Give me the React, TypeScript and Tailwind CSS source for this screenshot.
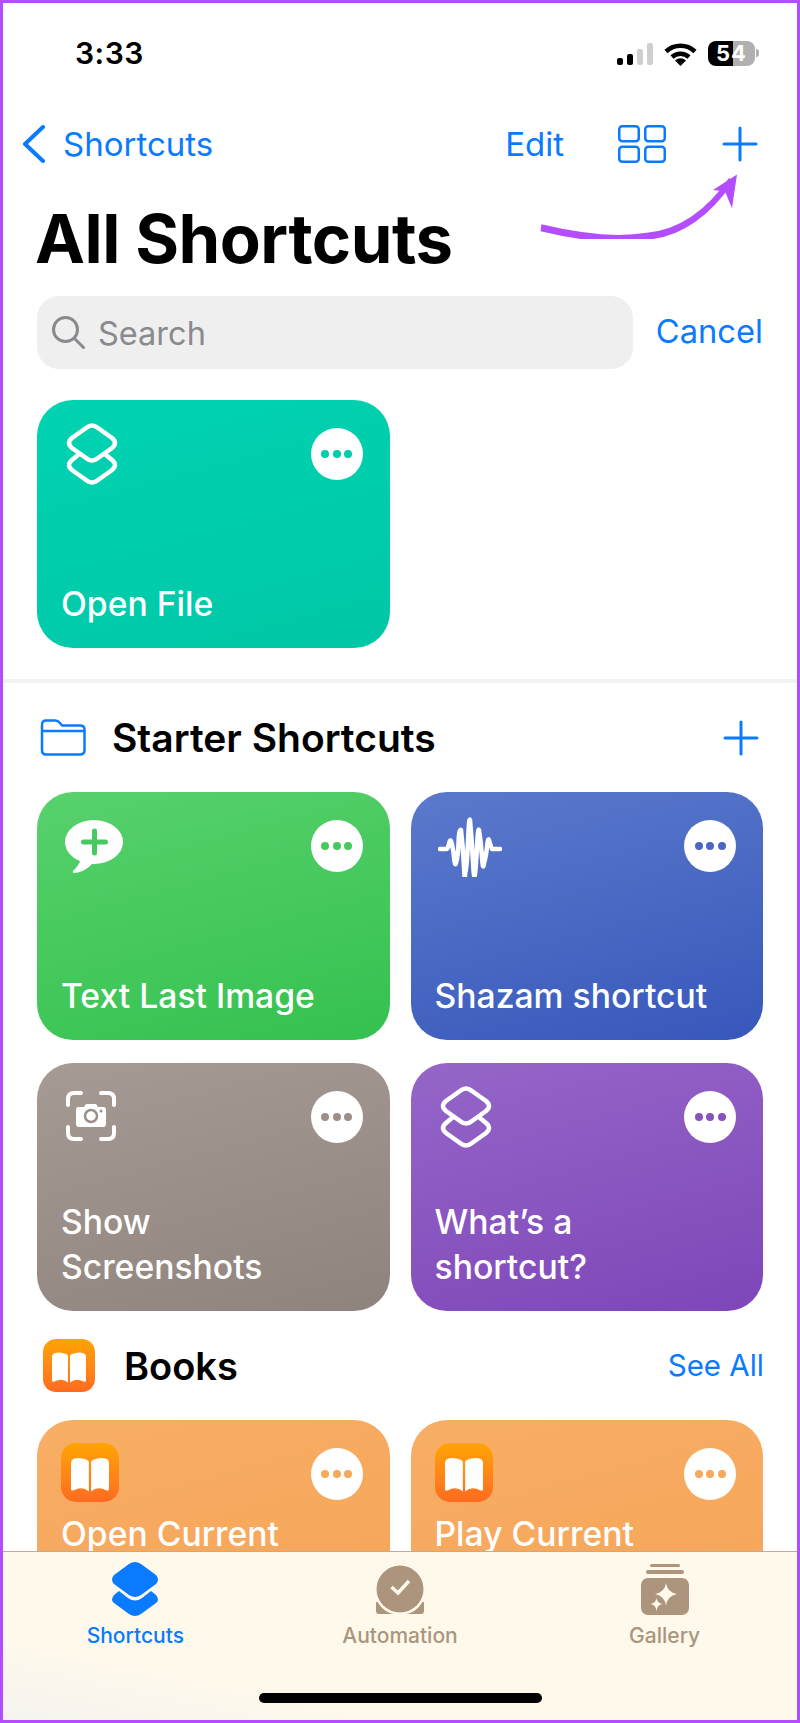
import type { ReactNode } from "react";

function Layers({ className = "" }: { className?: string }) {
  return (
    <svg viewBox="0 0 54 62" className={className} fill="none" stroke="white" strokeWidth="4.5" strokeLinecap="round">
      <path d="M21 5Q27 0 33 5L47 15Q53 20 47 25L33 35Q27 40 21 35L7 25Q1 20 7 15Z" />
      <path d="M13 32L7 37Q1 42 7 47L21 57Q27 62 33 57L47 47Q53 42 47 37L41 32" />
    </svg>
  );
}

function BookIcon({ className = "" }: { className?: string }) {
  return (
    <div className={`flex items-center justify-center bg-gradient-to-b from-[#ffa400] to-[#fe6a1f] ${className}`}>
      <svg viewBox="0 0 52 52" className="w-full h-full" fill="white">
        <path d="M25 17Q25 15 23 14.500Q17 12 12 13.500Q9 14.500 9 17.500L9 41Q9 43 11.500 42Q19 38 25 43Z" />
        <path d="M27 17Q27 15 29 14.500Q35 12 40 13.500Q43 14.500 43 17.500L43 41Q43 43 40.500 42Q33 38 27 43Z" />
      </svg>
    </div>
  );
}

function Dots({ dot }: { dot: string }) {
  return (
    <div className="w-[52px] h-[52px] rounded-full bg-white flex items-center justify-center gap-[3.500px] shrink-0">
      <span className={`w-[8px] h-[8px] rounded-full ${dot}`} />
      <span className={`w-[8px] h-[8px] rounded-full ${dot}`} />
      <span className={`w-[8px] h-[8px] rounded-full ${dot}`} />
    </div>
  );
}

function Card(props: { bg: string; dot: string; icon: ReactNode; title: ReactNode; titleClass?: string; iconClass?: string }) {
  return (
    <div className={`h-[248px] rounded-[36px] pl-[24px] pr-[27px] flex flex-col text-white ${props.bg}`}>
      <div className="flex justify-between items-start pt-[23px]">
        <div className={props.iconClass}>{props.icon}</div>
        <div className="mt-[5px]">
          <Dots dot={props.dot} />
        </div>
      </div>
      <div className={`mt-auto text-[33.700px] leading-[45px] font-medium ${props.titleClass ?? "pb-[22px]"}`}>{props.title}</div>
    </div>
  );
}

function Plus({ className = "" }: { className?: string }) {
  return (
    <svg viewBox="0 0 36 36" className={className} fill="none" stroke="#0a7aff" strokeWidth="3" strokeLinecap="round">
      <path d="M18 2V34M2 18H34" />
    </svg>
  );
}

export default function App() {
  return (
    <div className="relative w-[800px] h-[1723px] box-border overflow-hidden border-[3px] border-[#b44dff] bg-white [font-family:Inter,sans-serif] text-black">
      {/* Status bar */}
      <div className="h-[100px] flex items-center justify-between pl-[72px] pr-[38px]">
        <span className="text-[30px] font-semibold tracking-[0.5px]">3:33</span>
        <div className="flex items-center">
          <div className="flex items-end gap-[4px] h-[22px] mt-[1px]">
            <span className="w-[6px] h-[7px] rounded-[2px] bg-black" />
            <span className="w-[6px] h-[11px] rounded-[2px] bg-black" />
            <span className="w-[6px] h-[16px] rounded-[2px] bg-[#cfcfcf]" />
            <span className="w-[6px] h-[22px] rounded-[2px] bg-[#cfcfcf]" />
          </div>
          <svg viewBox="0 0 33 24" className="w-[33px] h-[24px] ml-[11px] mb-[-1px]" fill="none" stroke="black" strokeWidth="4.500">
            <path d="M2 9.500A21 21 0 0 1 31 9.500" />
            <path d="M8 15A12.500 12.500 0 0 1 25 15" />
            <path d="M16.500 24L11 18.500A8 8 0 0 1 22 18.500Z" fill="black" stroke="none" />
          </svg>
          <div className="ml-[11px] w-[47px] h-[25px] rounded-[8px] bg-[linear-gradient(to_right,black_53%,#b0b0b0_53%)] flex items-center justify-center text-white text-[22px] font-bold leading-none tracking-[1px]">
            54
          </div>
          <span className="ml-[1px] w-[3px] h-[8px] rounded-r-full bg-[#b0b0b0]" />
        </div>
      </div>

      {/* Nav */}
      <div className="h-[82px] flex items-center pl-[19px] pr-[39px] text-[#0a7aff]">
        <svg viewBox="0 0 24 38" className="w-[24px] h-[38px]" fill="none" stroke="#0a7aff" strokeWidth="4" strokeLinecap="round" strokeLinejoin="round">
          <path d="M21 2L3 19L21 36" />
        </svg>
        <span className="ml-[17px] text-[33px] leading-none">Shortcuts</span>
        <span className="ml-auto text-[33px] leading-none">Edit</span>
        <svg viewBox="0 0 48 38" className="w-[48px] h-[38px] ml-[54px]" fill="none" stroke="#0a7aff" strokeWidth="2.500">
          <rect x="1.250" y="1.250" width="19.500" height="15" rx="3" />
          <rect x="27.250" y="1.250" width="19.500" height="15" rx="3" />
          <rect x="1.250" y="21.750" width="19.500" height="15" rx="3" />
          <rect x="27.250" y="21.750" width="19.500" height="15" rx="3" />
        </svg>
        <Plus className="w-[36px] h-[36px] ml-[56px]" />
      </div>

      {/* Title */}
      <div className="h-[111px] flex items-center pl-[32px] pr-[34px]">
        <h1 className="text-[67px] leading-none font-bold tracking-[-0.5px] mt-[-4px]">All Shortcuts</h1>
      </div>

      {/* Search */}
      <div className="flex items-center px-[34px]">
        <div className="w-[596px] h-[73px] rounded-[22px] bg-[#efefef] flex items-center pl-[15px]">
          <svg viewBox="0 0 33 33" className="w-[33px] h-[33px]" fill="none" stroke="#8a8a8e" strokeWidth="3" strokeLinecap="round">
            <circle cx="13.500" cy="13.500" r="12" />
            <path d="M22.500 22.500L31.500 31.500" />
          </svg>
          <span className="ml-[13px] mt-[4px] text-[32.500px] leading-none text-[#8a8a8e]">Search</span>
        </div>
        <span className="ml-auto text-[32.700px] leading-none text-[#0a7aff] mt-[-2px]">Cancel</span>
      </div>

      {/* Pinned */}
      <div className="grid grid-cols-2 gap-x-[21px] px-[34px] pt-[31px]">
        <Card
          bg="bg-[linear-gradient(165deg,#00d3b2,#00c7a6)]"
          dot="bg-[#00cdab]"
          icon={<Layers className="w-[54px] h-[62px]" />}
          iconClass="ml-[4px]"
          title="Open File"
        />
      </div>

      <div className="mt-[31px] h-[4px] bg-[#f2f2f4]" />

      {/* Starter Shortcuts */}
      <div className="h-[109px] flex items-center pl-[38px] pr-[38px]">
        <svg viewBox="0 0 46 37" className="w-[46px] h-[37px] -ml-[1px]" fill="none" stroke="#0a7aff" strokeWidth="2.500" strokeLinejoin="round">
          <path d="M2 6Q2 1.500 6 1.500H15Q18 1.500 20 4L22 6.500H40Q44.500 6.500 44.500 10.500V31Q44.500 35.500 40 35.500H6Q2 35.500 2 31Z" />
          <path d="M2 12H44.500" />
        </svg>
        <h2 className="ml-[26px] text-[39px] leading-none font-semibold">Starter Shortcuts</h2>
        <Plus className="w-[36px] h-[36px] ml-auto" />
      </div>

      <div className="grid grid-cols-2 gap-x-[21px] gap-y-[23px] px-[34px]">
        <Card
          bg="bg-[linear-gradient(165deg,#58d16d,#34c14f)]"
          dot="bg-[#47c95f]"
          icon={
            <svg viewBox="0 0 58 54" className="w-[58px] h-[54px]">
              <ellipse cx="29" cy="22" rx="29" ry="22" fill="white" />
              <path d="M16 38Q14 46 8 51Q7 53 10 53Q20 52 28 43Z" fill="white" />
              <path d="M29.500 11V33M18.500 22H40.500" stroke="#47c95f" strokeWidth="5" strokeLinecap="round" />
            </svg>
          }
          iconClass="ml-[4px] mt-[5px]"
          title="Text Last Image"
        />
        <Card
          bg="bg-[linear-gradient(165deg,#5b79cc,#3758bb)]"
          dot="bg-[#4c68c4]"
          icon={
            <svg viewBox="0 0 64 60" className="w-[64px] h-[60px]" fill="none" stroke="white" strokeWidth="4.500" strokeLinecap="round" strokeLinejoin="round">
              <path d="M2 32H8Q10 32 11 27T13 24Q15 30 16 40T18 46Q20 40 20.500 26T23 13Q25 30 26 50T27 57Q29 50 30 25T32 3Q34 25 35 45T37 57Q38 50 39 30T41 13Q43 25 44 40T46 46Q48 40 49 30T51 23Q53 30 54 32H62" />
            </svg>
          }
          iconClass="ml-[3px] mt-[2px]"
          title="Shazam shortcut"
        />
        <Card
          bg="bg-[linear-gradient(165deg,#a59b94,#8f837d)]"
          dot="bg-[#9b8f88]"
          icon={
            <svg viewBox="0 0 50 50" className="w-[50px] h-[50px]">
              <g fill="none" stroke="white" strokeWidth="4" strokeLinecap="round">
                <path d="M2 14V8Q2 2 8 2H15M35 2H42Q48 2 48 8V14M48 36V42Q48 48 42 48H35M15 48H8Q2 48 2 42V36" />
              </g>
              <path d="M12 16Q10 16 10 19V33Q10 36 13 36H37Q40 36 40 33V19Q40 16 37 16H32L30 13H20L18 16Z" fill="white" />
              <circle cx="25" cy="25" r="6" fill="none" stroke="#9b8f88" strokeWidth="2.500" />
              <circle cx="35" cy="20" r="1.500" fill="#9b8f88" />
            </svg>
          }
          iconClass="ml-[5px] mt-[5px]"
          title={
            <>
              Show
              <br />
              Screenshots
            </>
          }
        />
        <Card
          bg="bg-[linear-gradient(165deg,#9566c8,#7e46b9)]"
          dot="bg-[#8852bf]"
          icon={<Layers className="w-[54px] h-[62px]" />}
          iconClass="ml-[4px]"
          title={
            <>
              What’s a
              <br />
              shortcut?
            </>
          }
        />
      </div>

      {/* Books */}
      <div className="h-[109px] flex items-center pl-[40px] pr-[33px]">
        <BookIcon className="w-[52px] h-[53px] rounded-[13px]" />
        <h2 className="ml-[29px] text-[38px] leading-none font-semibold">Books</h2>
        <span className="ml-auto text-[29.500px] leading-none text-[#0a7aff]">See All</span>
      </div>

      <div className="grid grid-cols-2 gap-x-[21px] px-[34px]">
        <Card
          bg="bg-[linear-gradient(165deg,#f8ae65,#f5a355)]"
          dot="bg-[#f6a85b]"
          icon={<BookIcon className="w-[58px] h-[59px] rounded-[15px]" />}
          title="Open Current"
          titleClass="pb-[112px]"
        />
        <Card
          bg="bg-[linear-gradient(165deg,#f8ae65,#f5a355)]"
          dot="bg-[#f6a85b]"
          icon={<BookIcon className="w-[58px] h-[59px] rounded-[15px]" />}
          title="Play Current"
          titleClass="pb-[112px]"
        />
      </div>

      {/* Arrow annotation */}
      <svg viewBox="0 0 230 50" className="absolute left-[532px] top-[166px] w-[230px] h-[70px]" preserveAspectRatio="none" fill="none">
        <path d="M6 42Q70 53 112 48Q160 45 196 8" stroke="#b44dff" strokeWidth="5" />
        <path d="M202 4L178 15L190 16L197 28Z" fill="#b44dff" />
      </svg>

      {/* Tab bar */}
      <div className="absolute left-0 right-0 bottom-0 h-[169px] border-t border-[#b8ae9c] bg-gradient-to-tr from-[#f6f3ef] via-[#fef9eb] via-25% to-[#fef9ea] flex flex-col">
        <div className="grid grid-cols-3 pt-[10px]">
          <div className="flex flex-col items-center text-[#0a7aff]">
            <svg viewBox="0 0 48 54" className="w-[48px] h-[54px]" fill="#0a7aff">
              <path d="M18 2Q24 -2 30 2L45 13Q49 17.500 45 22L30 33Q24 37 18 33L3 22Q-1 17.500 3 13Z" />
              <path d="M8 29L17 36Q24 41 31 36L40 29L45 33Q49 38 45 41L30 52Q24 56 18 52L3 41Q-1 38 3 33Z" />
            </svg>
            <span className="mt-[7px] text-[21px] leading-[26px] font-medium">Shortcuts</span>
          </div>
          <div className="flex flex-col items-center text-[#a8967f]">
            <svg viewBox="0 0 48 54" className="w-[48px] h-[54px]">
              <path d="M0 40H48V49Q48 52 45 52H3Q0 52 0 49Z" fill="#ac957c" />
              <circle cx="24" cy="27" r="26" fill="#fef9eb" />
              <circle cx="24" cy="27" r="23.500" fill="#ac957c" />
              <path d="M15.500 25L22 31L33 19" fill="none" stroke="#fef9eb" strokeWidth="3.500" />
            </svg>
            <span className="mt-[7px] text-[21px] leading-[26px] font-medium">Automation</span>
          </div>
          <div className="flex flex-col items-center text-[#a8967f]">
            <svg viewBox="0 0 48 54" className="w-[48px] h-[54px]">
              <rect x="9" y="2" width="30" height="3" rx="1.500" fill="#ac957c" />
              <rect x="5" y="8" width="38" height="4" rx="2" fill="#ac957c" />
              <rect x="0" y="16" width="48" height="37" rx="7" fill="#ac957c" />
              <path d="M25 21Q26 30 36 32Q26 34 25 44Q24 34 14 32Q24 30 25 21Z" fill="#fef9eb" />
              <path d="M15.500 36Q16 41 21.500 42Q16 43 15.500 49Q15 43 9.500 42Q15 41 15.500 36Z" fill="#fef9eb" />
            </svg>
            <span className="mt-[7px] text-[21px] leading-[26px] font-medium">Gallery</span>
          </div>
        </div>
        <div className="mt-auto mb-[17px] mx-auto w-[283px] h-[10px] rounded-full bg-black" />
      </div>
    </div>
  );
}
